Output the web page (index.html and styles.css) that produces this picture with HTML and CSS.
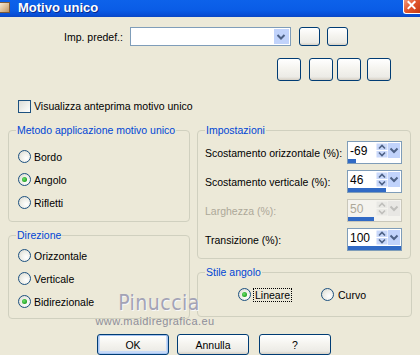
FILE: index.html
```html
<!DOCTYPE html>
<html>
<head>
    <link rel="stylesheet" href="styles.css">
</head>
<body>
<div class="window">
    <div class="titlebar">
        <span class="app-icon"></span>
        <span class="title">Motivo unico</span>
        <span class="close">
            <svg width="17" height="14" viewBox="0 0 17 14"><path d="M4 1 L12 9 M12 1 L4 9" stroke="#fff" stroke-width="2.2" fill="none"/></svg>
        </span>
    </div>

    <div class="preset-row">
        <span>Imp. predef.:</span>
        <div class="combo">
            <span class="combo-text"></span>
            <span class="combo-drop">
                <svg width="14" height="15" viewBox="0 0 14 15"><polyline points="3.5,6 7,9.5 10.5,6" stroke="#4D6185" stroke-width="2" fill="none"/></svg>
            </span>
        </div>
        <button class="xp-btn small"></button>
        <button class="xp-btn small"></button>
    </div>

    <div class="tool-row">
        <button class="xp-btn tool"></button>
        <button class="xp-btn tool wide-gap"></button>
        <button class="xp-btn tool"></button>
        <button class="xp-btn tool mid-gap"></button>
    </div>

    <label class="check-row">
        <span class="checkbox"></span>
        <span>Visualizza anteprima motivo unico</span>
    </label>

    <div class="columns">
        <div class="col-left">
            <fieldset class="group">
                <legend>Metodo applicazione motivo unico</legend>
                <div class="group-body method">
                    <div class="radio-row"><span class="radio"></span>Bordo</div>
                    <div class="radio-row"><span class="radio on"></span>Angolo</div>
                    <div class="radio-row"><span class="radio"></span>Rifletti</div>
                </div>
            </fieldset>
            <fieldset class="group spaced">
                <legend>Direzione</legend>
                <div class="group-body direction">
                    <div class="radio-row"><span class="radio"></span>Orizzontale</div>
                    <div class="radio-row"><span class="radio"></span>Verticale</div>
                    <div class="radio-row"><span class="radio on"></span>Bidirezionale</div>
                </div>
            </fieldset>
        </div>
        <div class="col-right">
            <fieldset class="group">
                <legend>Impostazioni</legend>
                <div class="group-body settings">
                    <div class="setting">
                        <span>Scostamento orizzontale (%):</span>
                        <div class="spin">
                            <div class="spin-field"><span class="spin-value">-69</span><span class="arrows"></span><span class="drop"></span></div>
                            <div class="bar"><div class="fill" style="width:8px"></div></div>
                        </div>
                    </div>
                    <div class="setting">
                        <span>Scostamento verticale (%):</span>
                        <div class="spin">
                            <div class="spin-field"><span class="spin-value">46</span><span class="arrows"></span><span class="drop"></span></div>
                            <div class="bar"><div class="fill" style="width:38px"></div></div>
                        </div>
                    </div>
                    <div class="setting disabled">
                        <span>Larghezza (%):</span>
                        <div class="spin">
                            <div class="spin-field"><span class="spin-value">50</span><span class="arrows"></span><span class="drop"></span></div>
                            <div class="bar"><div class="fill" style="width:26px"></div></div>
                        </div>
                    </div>
                    <div class="setting">
                        <span>Transizione (%):</span>
                        <div class="spin">
                            <div class="spin-field"><span class="spin-value">100</span><span class="arrows"></span><span class="drop"></span></div>
                            <div class="bar"><div class="fill" style="width:53px"></div></div>
                        </div>
                    </div>
                </div>
            </fieldset>
            <fieldset class="group spaced corner">
                <legend>Stile angolo</legend>
                <div class="group-body corner-row">
                    <span class="radio on"></span><span class="focus">Lineare</span>
                    <span class="radio curvo"></span><span>Curvo</span>
                </div>
            </fieldset>
        </div>
    </div>

    <div class="watermark">
        <div class="wm-name">Pinuccia</div>
        <div class="wm-site">www.maidiregrafica.eu</div>
    </div>

    <div class="button-row">
        <button class="xp-btn action default">OK</button>
        <button class="xp-btn action">Annulla</button>
        <button class="xp-btn action help">?</button>
    </div>
</div>
</body>
</html>
```

FILE: styles.css
```css
*{
    box-sizing:border-box;
}
body{
    margin:0;
    background:#ECE9D8;
    font-family:"Liberation Sans", Arial, sans-serif;
    font-size:10.5px;
    color:#000;
}
.window{
    position:relative;
    width:420px;
    height:355px;
    overflow:hidden;
    white-space:nowrap;
}
.titlebar{
    height:17px;
    display:flex;
    align-items:flex-start;
    background:linear-gradient(#0D62EA, #0A5CE6 60%, #0850D8 85%, #0A47C4);
}
.app-icon{
    width:10px;
    height:11px;
    margin-top:2px;
    background:linear-gradient(135deg, #F6E9D2, #D9B98E 60%, #B8936A);
    border:1px solid #7A5A3A;
    border-left:none;
}
.title{
    margin-left:8px;
    color:#fff;
    font-weight:bold;
    font-size:13px;
    line-height:15px;
    text-shadow:1px 1px #0A2A8C;
}
.close{
    margin-left:auto;
    width:17px;
    height:15px;
    margin-top:-1px;
    background:linear-gradient(135deg, #F29A7E, #E2572E 45%, #C63A14);
    border:1px solid #fff;
    border-right:none;
    border-radius:0 0 0 3px;
    display:flex;
}

.preset-row{
    display:flex;
    align-items:center;
    margin-top:10px;
    padding-left:64px;
    height:19px;
}
.combo{
    display:flex;
    width:161px;
    height:19px;
    margin-left:7px;
    border:1px solid #7F9DB9;
    background:#fff;
}
.combo-text{
    flex:1;
}
.combo-drop{
    width:15px;
    margin:1px;
    background:#C1D3FB;
    display:flex;
    align-items:center;
    justify-content:center;
}
.xp-btn{
    font-family:inherit;
    font-size:10.5px;
    padding:0;
    border:1px solid #003C74;
    border-radius:3px;
    background:linear-gradient(#FFFFFF, #F4F3EE 50%, #ECEBE6 85%, #D6D0C5);
    color:#000;
}
.small{
    width:21px;
    height:19px;
    margin-left:7px;
}
.preset-row .combo + .small{
    margin-left:8px;
}

.tool-row{
    display:flex;
    justify-content:flex-end;
    padding-right:29px;
    margin-top:12px;
}
.tool{
    width:24px;
    height:23px;
    margin-left:4px;
}
.tool.wide-gap{
    margin-left:8px;
}
.tool.mid-gap{
    margin-left:6px;
}

.check-row{
    display:flex;
    align-items:center;
    margin:18px 0 0 18px;
    height:14px;
}
.checkbox{
    width:13px;
    height:13px;
    margin-right:3px;
    border:1px solid #1C5180;
    background:linear-gradient(135deg, #DCDCD7, #F5F5F2 70%, #fff);
}

.columns{
    display:flex;
    margin:11px 0 0 8px;
}
.col-left{
    width:182px;
}
.col-right{
    width:214px;
    margin-left:7px;
}
.group{
    margin:0;
    border:1px solid #D0D0BF;
    border-radius:4px;
    padding:0;
}
.group.spaced{
    margin-top:7px;
}
.group legend{
    color:#0046D5;
    padding:0 1px;
    margin-left:7px;
    line-height:13px;
}
.method{
    padding:8px 0 7px 9px;
}
.direction{
    padding:2px 0 5px 9px;
}
.radio-row{
    display:flex;
    align-items:center;
    height:23px;
}
.radio{
    width:13px;
    height:13px;
    border-radius:50%;
    border:1px solid #1C5180;
    background:radial-gradient(circle at 65% 65%, #fff, #EEEEE8 50%, #D4D4CC);
    margin-right:3px;
    display:flex;
    align-items:center;
    justify-content:center;
}
.radio.on::after{
    content:"";
    width:5px;
    height:5px;
    border-radius:50%;
    background:radial-gradient(circle at 40% 40%, #6CE06C, #21A121 70%);
}

.settings{
    padding:4px 8px 7px 7px;
}
.setting{
    display:flex;
    align-items:center;
    justify-content:space-between;
    height:23px;
}
.setting + .setting{
    margin-top:6px;
}
.spin{
    width:55px;
    height:23px;
    border:1px solid #7F9DB9;
    background:#fff;
    display:flex;
    flex-direction:column;
}
.spin-field{
    flex:1;
    display:flex;
    align-items:center;
}
.spin-value{
    flex:1;
    padding-left:2px;
    font-size:12px;
}
.arrows{
    width:12px;
    height:15px;
    background:
        url("data:image/svg+xml,%3Csvg xmlns='http://www.w3.org/2000/svg' width='12' height='15'%3E%3Crect x='0.5' y='0.5' width='11' height='6.5' fill='%23C9D8FA'/%3E%3Crect x='0.5' y='8' width='11' height='6.5' fill='%23C9D8FA'/%3E%3Cpolyline points='3,5.5 6,2.5 9,5.5' stroke='%234D6185' stroke-width='1.6' fill='none'/%3E%3Cpolyline points='3,9.5 6,12.5 9,9.5' stroke='%234D6185' stroke-width='1.6' fill='none'/%3E%3C/svg%3E");
}
.drop{
    width:12px;
    height:15px;
    margin-right:1px;
    background:#C1D3FB url("data:image/svg+xml,%3Csvg xmlns='http://www.w3.org/2000/svg' width='12' height='15'%3E%3Cpolyline points='2.5,5.5 6,9 9.5,5.5' stroke='%234D6185' stroke-width='2' fill='none'/%3E%3C/svg%3E");
}
.bar{
    height:4px;
}
.fill{
    height:4px;
    background:#316AC5;
}
.disabled{
    color:#ACA899;
}
.disabled .spin{
    border-color:#C9C7BA;
    background:#F4F3EE;
}
.disabled .arrows,
.disabled .drop{
    opacity:0.35;
    filter:grayscale(1);
}
.disabled .spin-value{
    color:#ACA899;
}

.corner{
    width:215px;
}
.corner-row{
    display:flex;
    align-items:center;
    height:23px;
    box-sizing:content-box;
    padding:4px 0 10px 40px;
}
.focus{
    outline:1px dotted #000;
    padding:0 1px;
}
.radio.curvo{
    margin-left:30px;
    margin-right:4px;
}

.watermark{
    position:absolute;
    left:93px;
    top:291px;
    text-align:center;
    width:124px;
    pointer-events:none;
}
.wm-name{
    font-family:"DejaVu Sans Condensed", "DejaVu Sans", sans-serif;
    font-size:21px;
    letter-spacing:0.5px;
    color:#A3A3B6;
    text-shadow:1px 1px #F8F8F8;
    line-height:24px;
    padding-left:8px;
}
.wm-site{
    font-size:11px;
    color:#8E8E9A;
    letter-spacing:0.4px;
    line-height:12px;
}

.button-row{
    display:flex;
    margin:15px 0 0 97px;
}
.action{
    width:72px;
    height:21px;
    margin-right:8px;
}
.action.help{
    margin-left:2px;
}
.action.default{
    box-shadow:inset 0 0 0 1px #A6C4F2, inset 0 -1px 0 2px #C7DAF7;
}
```
